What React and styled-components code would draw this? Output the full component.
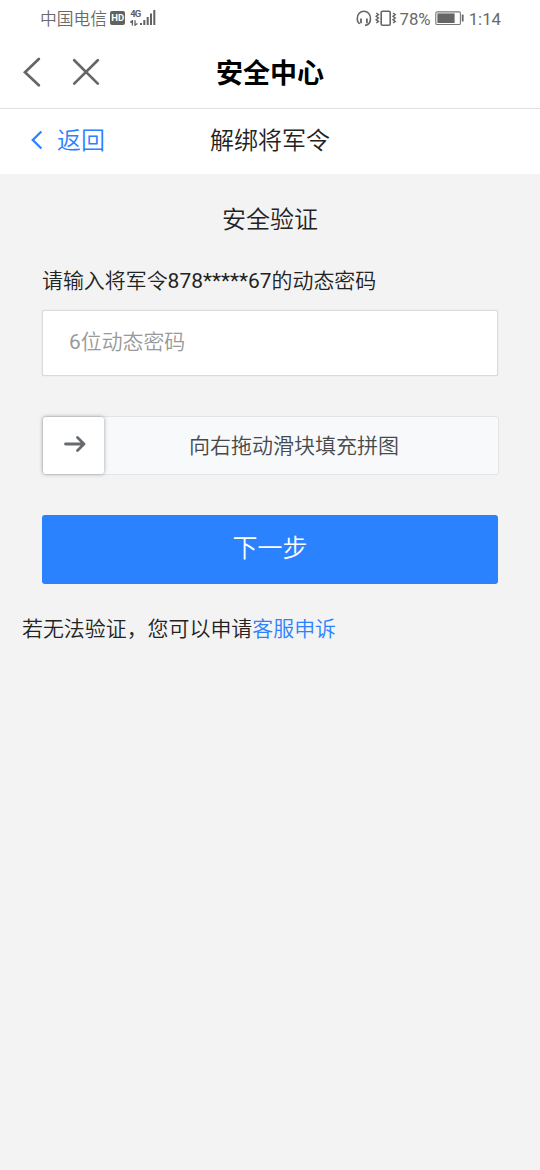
import React from 'react';
import styled, { createGlobalStyle } from 'styled-components';

const GlobalStyle = createGlobalStyle`
  * {
    box-sizing: border-box;
  }

  body {
    margin: 0;
    background-color: #f3f3f3;
    font-family: Roboto, "Noto Sans CJK SC DemiLight", "Noto Sans CJK SC", sans-serif;
    color: #222;
  }
`

const Screen = styled.div`
  min-height: 1170px;
  display: flex;
  flex-direction: column;
`;

const StatusBar = styled.div`
  height: 38px;
  padding: 0 39px 0 40px;
  display: flex;
  align-items: center;
  justify-content: space-between;
  background-color: #fff;
  color: #6a6a6a;
  font-size: 16.8px;
  line-height: 38px;
`;

const StatusGroup = styled.div`
  display: flex;
  align-items: center;

  svg {
    display: block;
    flex: none;
  }
`;

const Percent = styled.span`
  margin: 0 4px 0 2px;
`;

const Clock = styled.span`
  margin-left: 4px;
`;

const TitleBar = styled.header`
  height: 71px;
  padding: 0 22px;
  display: grid;
  grid-template-columns: 1fr auto 1fr;
  align-items: center;
  background-color: #fff;
  border-bottom: 1px solid #dfdfdf;
`;

const TitleActions = styled.div`
  display: flex;
  gap: 30px;
  padding-bottom: 3px;
`;

const IconButton = styled.button`
  padding: 0;
  border: none;
  background: none;
  color: #666;
  line-height: 0;
`;

const Title = styled.h1`
  margin: 0;
  padding-bottom: 2px;
  font-family: "Noto Sans CJK SC", sans-serif;
  font-size: 27px;
  font-weight: 700;
  line-height: 40px;
  color: #000;
`;

const SubBar = styled.nav`
  height: 65px;
  padding: 0 30px 1px;
  display: grid;
  grid-template-columns: 1fr auto 1fr;
  align-items: center;
  background-color: #fff;
  font-size: 24px;
  line-height: 36px;
`;

const Back = styled.a`
  display: flex;
  align-items: center;
  gap: 14px;
  color: #2b82ff;

  svg {
    margin-bottom: 2px;
  }
`;

const Content = styled.main`
  padding: 28px 42px 0;
  display: flex;
  flex-direction: column;
`;

const Heading = styled.h2`
  margin: 0;
  font-size: 24px;
  font-weight: 400;
  line-height: 36px;
  text-align: center;
`;

const Label = styled.label`
  margin-top: 27px;
  font-size: 20.95px;
  line-height: 32px;
`;

const CodeInput = styled.input`
  height: 66px;
  margin-top: 13px;
  padding: 0 26px 2px;
  border: 1px solid #dadada;
  border-radius: 2px;
  background-color: #fff;
  box-shadow: 0 0 1px rgba(0, 0, 0, 0.2);
  font-family: inherit;
  font-size: 20.9px;
  outline: none;

  &::placeholder {
    color: #999;
  }
`;

const Slider = styled.div`
  height: 59px;
  width: 457px;
  margin-top: 40px;
  display: flex;
  border: 1px solid #e2e4e7;
  border-radius: 3px;
  background-color: #f7f9fb;
`;

const SliderHandle = styled.div`
  width: 61px;
  flex: none;
  display: flex;
  align-items: center;
  justify-content: center;
  padding: 0 0 3px 2px;
  border-radius: 3px;
  background-color: #fff;
  box-shadow: 0 0 4px rgba(0, 0, 0, 0.35);
  color: #676a6f;
`;

const SliderText = styled.span`
  flex: 1;
  padding-right: 14px;
  font-size: 21px;
  line-height: 59px;
  text-align: center;
  color: #45494c;
`;

const SubmitButton = styled.button`
  height: 69px;
  margin-top: 39.5px;
  padding: 0 0 6px;
  border: none;
  border-radius: 3px;
  background-color: #2b82ff;
  color: #fff;
  font-family: inherit;
  font-size: 25px;
`;

const Help = styled.p`
  margin: 29px 22px 0;
  font-size: 20.95px;
  line-height: 32px;
`;

const HelpLink = styled.a`
  color: #2b82ff;
`;

const HdBadge = styled.span`
  width: 15px;
  height: 14px;
  margin: 0 5px 2px 3px;
  border-radius: 2px;
  background-color: #626262;
  color: #fff;
  font-size: 9.5px;
  font-weight: 700;
  line-height: 14.5px;
  text-align: center;
`;

const Network = styled.div`
  width: 10px;
  height: 18px;
  margin-bottom: 2px;
  display: flex;
  flex-direction: column;
  align-items: flex-start;
  gap: 1px;
  color: #626262;
  font-size: 9.5px;
  font-weight: 700;
  line-height: 10px;
  letter-spacing: -0.8px;
`;

const SignalBars = () => (
  <svg width="17" height="18" viewBox="0 0 17 18" fill="#626262">
    <rect x="0" y="13" width="2" height="2"/>
    <rect x="3.3" y="10" width="2" height="5"/>
    <rect x="6.7" y="7" width="2" height="8"/>
    <rect x="10" y="3.5" width="2" height="11.5"/>
    <rect x="13.3" y="0" width="2" height="15"/>
  </svg>
)

const DataArrows = () => (
  <svg width="9" height="6" viewBox="0 0 9 6" fill="none" stroke="#626262" strokeWidth="1.3">
    <path d="M0.3 2.4L2.4 0.6V5.6M5 0.2V5.2L7.4 3.4"/>
  </svg>
)

const HeadsetIcon = () => (
  <svg width="19" height="18" viewBox="0 0 19 18" fill="none" stroke="#666" strokeWidth="1.6">
    <path d="M4 13.6C1.8 13 1.3 11 1.3 8.4C1.3 4.2 4.2 1.3 7.9 1.3S14.5 4.2 14.5 8.4C14.5 12.6 13 14.8 9 15.4"/>
    <path d="M5 8.4V13.2M10.9 8.4V13.2" strokeWidth="1.8"/>
  </svg>
)

const VibrateIcon = () => (
  <svg width="22" height="18" viewBox="0 0 22 18" fill="none" stroke="#666">
    <rect x="6.2" y="1.3" width="9" height="14" rx="1.2" strokeWidth="1.6"/>
    <path d="M1.2 3L3.4 4.5L1.2 6.3L3.4 8L1.2 9.7L3.4 11.5L1.2 13M18 3L20.2 4.5L18 6.3L20.2 8L18 9.7L20.2 11.5L18 13" strokeWidth="1.5"/>
  </svg>
)

const BatteryIcon = () => (
  <svg width="30" height="16" viewBox="0 0 30 16">
    <rect x="0.8" y="0.9" width="24.6" height="12.6" rx="1.3" fill="none" stroke="#777" strokeWidth="1.1"/>
    <rect x="2.4" y="2.4" width="17.2" height="9.6" fill="#666"/>
    <rect x="26.8" y="3.6" width="1.8" height="7" rx="0.6" fill="#666"/>
  </svg>
)

const App = () => {
  const [code, setCode] = React.useState('');

  return (
    <Screen>
      <GlobalStyle/>
      <StatusBar>
        <StatusGroup>
          <span>中国电信</span>
          <HdBadge>HD</HdBadge>
          <Network>
            4G
            <DataArrows/>
          </Network>
          <SignalBars/>
        </StatusGroup>
        <StatusGroup>
          <HeadsetIcon/>
          <VibrateIcon/>
          <Percent>78%</Percent>
          <BatteryIcon/>
          <Clock>1:14</Clock>
        </StatusGroup>
      </StatusBar>
      <TitleBar>
        <TitleActions>
          <IconButton aria-label="后退">
            <svg width="20" height="30" viewBox="0 0 20 30" fill="none" stroke="currentColor" strokeWidth="2.7" strokeLinecap="round">
              <path d="M16.8 2L3 15.2L16.8 28.2"/>
            </svg>
          </IconButton>
          <IconButton aria-label="关闭">
            <svg width="28" height="30" viewBox="0 0 28 30" fill="none" stroke="currentColor" strokeWidth="2.7" strokeLinecap="round">
              <path d="M2.2 3.2L25.8 26.6M25.8 3.2L2.2 26.6"/>
            </svg>
          </IconButton>
        </TitleActions>
        <Title>安全中心</Title>
      </TitleBar>
      <SubBar>
        <Back>
          <svg width="13" height="20" viewBox="0 0 13 20" fill="none" stroke="currentColor" strokeWidth="2.3">
            <path d="M11.4 1.5L2.8 10L11.4 18.5"/>
          </svg>
          返回
        </Back>
        <span>解绑将军令</span>
      </SubBar>
      <Content>
        <Heading>安全验证</Heading>
        <Label htmlFor="code">请输入将军令878*****67的动态密码</Label>
        <CodeInput id="code" value={code} onChange={e => setCode(e.target.value)} placeholder="6位动态密码"/>
        <Slider>
          <SliderHandle>
            <svg width="24" height="18" viewBox="0 0 24 18" fill="none" stroke="currentColor" strokeWidth="2.8" strokeLinecap="round" strokeLinejoin="round">
              <path d="M2.5 9H21M14.5 2.5L21 9L14.5 15.5"/>
            </svg>
          </SliderHandle>
          <SliderText>向右拖动滑块填充拼图</SliderText>
        </Slider>
        <SubmitButton>下一步</SubmitButton>
      </Content>
      <Help>若无法验证，您可以申请<HelpLink>客服申诉</HelpLink></Help>
    </Screen>
  );
}

export default App;
